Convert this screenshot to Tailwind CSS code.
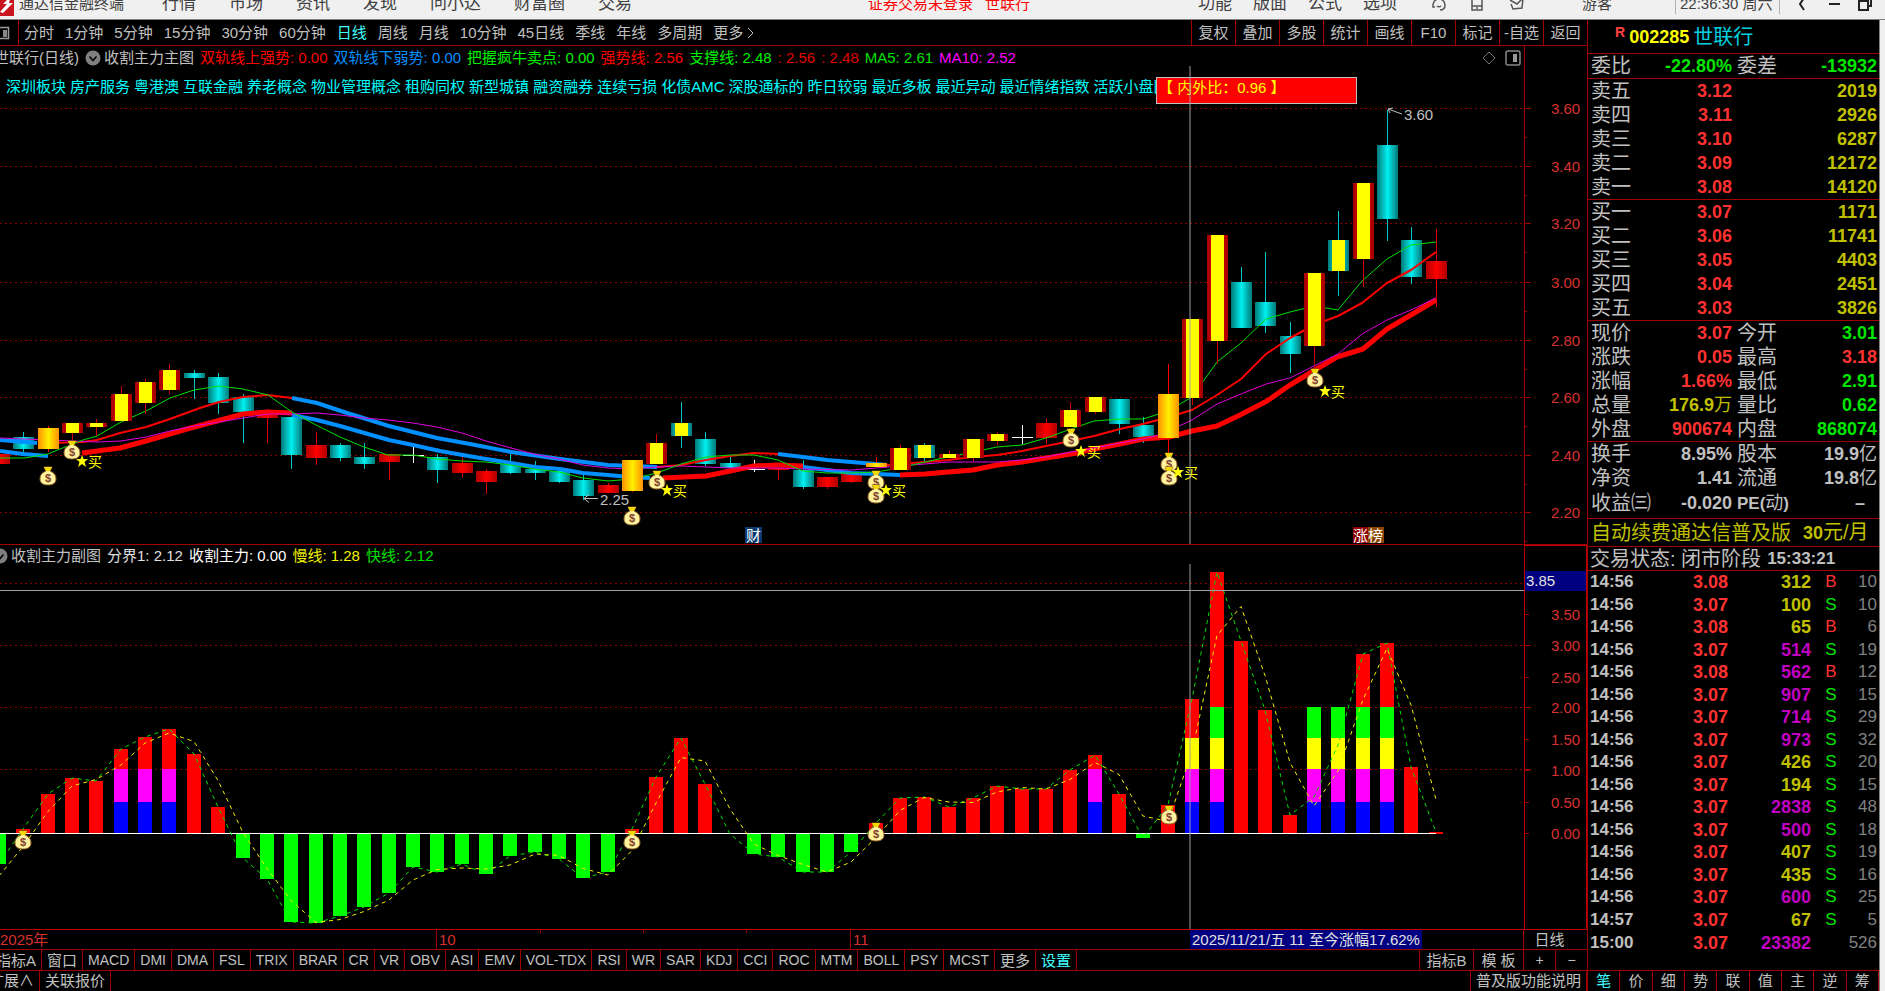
<!DOCTYPE html>
<html lang="zh-CN">
  <head>
    <meta charset="UTF-8" />
    <meta name="viewport" content="width=device-width, initial-scale=1.0" />
    <title>通达信金融终端</title>
    <script src="https://cdn.jsdelivr.net/npm/@tailwindcss/browser@4"></script>
  </head>
  <body class="flex h-screen flex-col overflow-hidden bg-black font-['Liberation_Sans','Noto_Sans_CJK_SC',sans-serif] text-[15px] leading-5 text-[#c0c0c0]">
    <!-- title bar -->
    <header class="h-5 shrink-0 overflow-hidden border-b border-[#808080] bg-[#f0f0f0] text-[#404040]">
      <div class="-mt-3 flex h-8 items-center whitespace-nowrap">
        <svg class="h-6 w-[14px] shrink-0" viewBox="0 0 14 24"><rect width="14" height="24" fill="#c8141e" /><path d="M0 20 7 12H3L11 4 9 11h4L3 21z" fill="#fff" /></svg>
        <span class="ml-[5px] w-[143px]">通达信金融终端</span>
        <nav class="flex gap-[33px] text-[17px]">
          <button>行情</button><button>市场</button><button>资讯</button><button>发现</button><button>问小达</button><button>财富圈</button><button>交易</button>
        </nav>
        <div class="flex flex-1 justify-center gap-3 pl-[68px] text-[#ff0000]"><span>证券交易未登录</span><span>世联行</span></div>
        <nav class="flex w-[233px] gap-[21px] text-[17px]">
          <button>功能</button><button>版面</button><button>公式</button><button>选项</button>
        </nav>
        <div class="flex w-[151px] gap-[22px]">
          <button aria-label="客服"><svg class="size-4" viewBox="0 0 16 16" fill="none" stroke="#555" stroke-width="1.5"><path d="M2 9a6 6 0 0 1 12 0c0 3-2 5-5 5M2 8v3h2M6 10c1 1 3 1 4 0" /></svg></button>
          <button aria-label="手机"><svg class="size-4" viewBox="0 0 16 16" fill="none" stroke="#555" stroke-width="1.5"><path d="M3 0v14h10V0M3 10h10M7 12h2" /></svg></button>
          <button aria-label="邮件"><svg class="size-5" viewBox="0 0 20 16" fill="none" stroke="#555" stroke-width="1.5"><path d="M2 3l14-1-1 10-9 1-2-5M3 4l7 4 6-6" /></svg></button>
        </div>
        <span class="w-[93px]">游客</span>
        <span class="w-[105px] border-x border-[#b0b0b0] px-1">22:36:30 周六</span>
        <div class="flex w-[105px] justify-between pr-3 pl-[14px]">
          <button aria-label="返回"><svg class="size-4" viewBox="0 0 16 16" fill="none" stroke="#222" stroke-width="2"><path d="M10 2 6 8l4 6" /></svg></button>
          <button aria-label="最小化"><svg class="size-4" viewBox="0 0 16 16" fill="none" stroke="#222" stroke-width="2"><path d="M3 8h11" /></svg></button>
          <button aria-label="还原"><svg class="size-4" viewBox="0 0 16 16" fill="none" stroke="#222" stroke-width="2"><path d="M2 5h9v9H2zM5 4V1h9v9h-3" /></svg></button>
        </div>
      </div>
    </header>

    <div class="flex min-h-0 flex-1">
      <main class="flex min-w-0 flex-1 flex-col">
        <!-- period bar -->
        <nav class="flex h-[26px] shrink-0 items-stretch border-b border-[#a00000] whitespace-nowrap">
          <button class="w-[19px] border-r border-[#a00000]" aria-label="侧栏"><svg class="h-3.5 w-[11px]" viewBox="0 0 11 14"><path d="M0 1.5h8.500v11H0" fill="none" stroke="#999" stroke-width="1.500" /><path d="M3 4h4v7H3z" fill="#888" /></svg></button>
          <div class="flex flex-1 items-center gap-[11px] pl-[5px]">
            <button>分时</button><button>1分钟</button><button>5分钟</button><button>15分钟</button><button>30分钟</button><button>60分钟</button><button class="text-[#40ffff]">日线</button><button>周线</button><button>月线</button><button>10分钟</button><button>45日线</button><button>季线</button><button>年线</button><button>多周期</button>
            <button class="flex items-center gap-1">更多<svg class="h-3 w-2" viewBox="0 0 8 12" fill="none" stroke="#c0c0c0"><path d="m1 1 5 5-5 5" /></svg></button>
          </div>
          <div class="flex *:w-11 *:border-l *:border-[#a00000]">
            <button>复权</button><button>叠加</button><button>多股</button><button>统计</button><button>画线</button><button>F10</button><button>标记</button><button>-自选</button><button>返回</button>
          </div>
        </nav>

        <!-- main chart -->
        <section class="relative min-h-0 flex-[499]">
          <svg id="mainChart" class="h-full w-full" viewBox="0 46 1587 499"></svg>
          <div class="absolute inset-x-0 top-0.5 flex h-5 items-center gap-1.5 overflow-hidden whitespace-nowrap">
            <span class="-ml-[6px]">世联行(日线)</span>
            <span class="flex items-center gap-[3px]"><svg class="size-4" viewBox="0 0 16 16"><circle cx="8" cy="8" r="7.500" fill="#808080" /><path d="m4.500 6.500 3.500 4 3.500-4" fill="none" stroke="#000" stroke-width="1.500" /></svg>收割主力主图</span>
            <span class="text-[#ff0000]">双轨线上强势: 0.00</span>
            <span class="text-[#0090ff]">双轨线下弱势: 0.00</span>
            <span class="text-[#00f000]">把握疯牛卖点: 0.00</span>
            <span class="text-[#ff0000]">强势线: 2.56</span>
            <span class="text-[#00f000]">支撑线: 2.48</span>
            <span class="text-[#e00000]">: 2.56</span>
            <span class="text-[#e00000]">: 2.48</span>
            <span class="text-[#00e000]">MA5: 2.61</span>
            <span class="text-[#ff00ff]">MA10: 2.52</span>
          </div>
          <div class="absolute top-[31px] left-0 flex w-[1156px] gap-1 overflow-hidden pl-[6px] whitespace-nowrap text-[#00ffff]">
            <span>深圳板块</span><span>房产服务</span><span>粤港澳</span><span>互联金融</span><span>养老概念</span><span>物业管理概念</span><span>租购同权</span><span>新型城镇</span><span>融资融券</span><span>连续亏损</span><span>化债AMC</span><span>深股通标的</span><span>昨日较弱</span><span>最近多板</span><span>最近异动</span><span>最近情绪指数</span><span>活跃小盘国</span>
          </div>
          <div class="absolute top-1 right-[66px] flex items-center gap-2">
            <svg class="size-4" viewBox="0 0 16 16" fill="none" stroke="#777"><path d="m8 2 6 6-6 6-6-6z" /></svg>
            <svg class="size-4" viewBox="0 0 16 16" fill="none" stroke="#888" stroke-width="1.500"><rect x="1" y="1" width="14" height="14" rx="2" /><path d="M8 4h4v8H8z" fill="#999" stroke="none" /></svg>
          </div>
        </section>

        <!-- indicator chart -->
        <section class="relative min-h-0 flex-[385]">
          <svg id="subChart" class="h-full w-full" viewBox="0 545 1587 385"></svg>
          <div class="absolute top-px left-0 flex h-5 items-center gap-1.5 whitespace-nowrap">
            <span class="flex items-center gap-[3px]"><svg class="-ml-2 size-4" viewBox="0 0 16 16"><circle cx="8" cy="8" r="7.500" fill="#808080" /><path d="m4.500 6.500 3.500 4 3.500-4" fill="none" stroke="#000" stroke-width="1.500" /></svg>收割主力副图</span>
            <span class="text-[#e0e0e0]">分界1: 2.12</span>
            <span class="text-[#ffffff]">收割主力: 0.00</span>
            <span class="text-[#f0f000]">慢线: 1.28</span>
            <span class="text-[#00e000]">快线: 2.12</span>
          </div>
        </section>

        <!-- date axis -->
        <div class="relative flex h-5 shrink-0 border-b border-[#a00000] text-[#d83030]">
          <span class="w-[436px]">2025年</span>
          <span class="flex w-[414px] items-start border-l border-[#a00000] pl-0.5">
            <span class="w-[101px]">10</span>
            <i class="h-[3px] w-[103px] border-l border-[#a00000]"></i><i class="h-[3px] w-[103px] border-l border-[#a00000]"></i><i class="h-[3px] border-l border-[#a00000]"></i>
          </span>
          <span class="flex-1 border-l border-[#a00000] pl-0.5">11</span>
          <span class="w-16 border-l border-[#a00000] pr-3 text-center text-[#c0c0c0]">日线</span>
          <span class="absolute top-0 left-[1190px] h-[19px] bg-[#000080] px-0.5 whitespace-nowrap text-[#e0e0e0]">2025/11/21/五 11 至今涨幅17.62%</span>
        </div>

        <!-- indicator tabs -->
        <nav class="flex h-[21px] shrink-0 border-b border-[#a00000] text-sm whitespace-nowrap">
          <div class="flex overflow-hidden *:border-r *:border-[#a00000] *:px-[5px]">
            <button class="-ml-[9px] text-[15px]">指标A</button><button class="text-[15px]">窗口</button><button>MACD</button><button>DMI</button><button>DMA</button><button>FSL</button><button>TRIX</button><button>BRAR</button><button>CR</button><button>VR</button><button>OBV</button><button>ASI</button><button>EMV</button><button>VOL-TDX</button><button>RSI</button><button>WR</button><button>SAR</button><button>KDJ</button><button>CCI</button><button>ROC</button><button>MTM</button><button>BOLL</button><button>PSY</button><button>MCST</button><button class="text-[15px]">更多</button><button class="text-[15px] text-[#40ffff]">设置</button>
          </div>
          <div class="ml-auto flex *:border-l *:border-[#a00000]">
            <button class="w-[54px] text-[15px]">指标B</button><button class="w-[50px] text-[15px]">模 板</button><button class="w-8">+</button><button class="w-8">−</button>
          </div>
        </nav>
        <nav class="flex h-5 shrink-0 whitespace-nowrap *:border-r *:border-[#a00000] *:px-[5px]">
          <button class="-ml-4">扩展∧</button><button>关联报价</button>
          <button class="ml-auto border-x pr-0.5 pl-1">普及版功能说明</button>
        </nav>
      </main>

      <!-- quote panel -->
      <aside class="flex w-[298px] shrink-0 border-l border-[#a00000]">
        <div class="flex flex-1 flex-col text-xl/6 whitespace-nowrap">
          <h1 class="flex h-[34px] items-center gap-1 border-b border-[#a00000] pl-[27px]"><span class="self-start text-sm/6 font-bold text-[#ff4040]">R</span><span class="text-lg/6 font-bold text-[#ffff00]">002285</span><span class="text-[#00d0e0]">世联行</span></h1>
          <table class="w-full table-fixed border-b border-[#a00000]"><tbody id="ratio"></tbody></table>
          <table class="w-full table-fixed border-b border-[#a00000]"><tbody id="asks"></tbody></table>
          <table class="w-full table-fixed border-b border-[#a00000]"><tbody id="bids"></tbody></table>
          <table class="w-full table-fixed border-b border-[#a00000]"><tbody id="stats"></tbody></table>
          <div class="border-b border-[#a00000] pb-0.5"><table class="w-full table-fixed"><tbody id="basics"></tbody></table></div>
          <a href="#" class="flex h-7 items-center gap-3 border-b border-[#a00000] pl-[3px] text-[#c0c000]"><span>自动续费通达信普及版</span><span><b class="text-lg/6">30</b>元/月</span></a>
          <p class="flex h-6 items-center gap-1.5 border-b border-[#a00000] pl-0.5">交易状态: 闭市阶段 <b class="text-[17px]">15:33:21</b></p>
          <table class="h-[383px] w-full table-fixed text-lg/5">
            <colgroup><col class="w-[56px]" /><col class="w-[84px]" /><col class="w-[83px]" /><col class="w-[40px]" /><col /></colgroup>
            <tbody id="ticks"></tbody>
          </table>
          <nav class="mt-auto flex h-[21px] border-t border-[#a00000] text-[15px]/5 *:flex-1 *:border-r *:border-[#a00000]">
            <button class="text-[#40ffff]">笔</button><button>价</button><button>细</button><button>势</button><button>联</button><button>值</button><button>主</button><button>逆</button><button>筹</button>
          </nav>
        </div>
        <div class="w-[6px] border-l border-[#808080] bg-[#f0f0f0]"></div>
      </aside>
    </div>

    <script>
      // quote tables
      const R = "text-[#ff3232]", G = "text-[#00e600]", Y = "text-[#c0c000]", W = "text-[#c0c0c0]", M = "text-[#c000c0]";

      const row4 = (r) => `<tr class="h-6">
        <th class="w-[64px] p-0 pl-[3px] text-left font-normal">${r[0]}</th>
        <td class="w-[80px] p-0 text-right text-lg/6 font-bold ${r[2]}">${r[1]}</td>
        <th class="w-[64px] p-0 pl-[5px] text-left font-normal">${r[3] || ""}</th>
        <td class="p-0 pr-0.5 text-right text-lg/6 font-bold ${r[5]}">${r[4]}</td></tr>`;
      const fill = (id, rows) => (document.getElementById(id).innerHTML = rows.map(row4).join(""));

      fill("ratio", [["委比", "-22.80%", G, "委差", "-13932", G]]);
      fill("asks", [["卖五", "3.12", 2019], ["卖四", "3.11", 2926], ["卖三", "3.10", 6287], ["卖二", "3.09", 12172], ["卖一", "3.08", 14120]].map((a) => [a[0], a[1], R, "", a[2], Y]));
      fill("bids", [["买一", "3.07", 1171], ["买二", "3.06", 11741], ["买三", "3.05", 4403], ["买四", "3.04", 2451], ["买五", "3.03", 3826]].map((a) => [a[0], a[1], R, "", a[2], Y]));
      fill("stats", [
        ["现价", "3.07", R, "今开", "3.01", G],
        ["涨跌", "0.05", R, "最高", "3.18", R],
        ["涨幅", "1.66%", R, "最低", "2.91", G],
        ["总量", '176.9<span class="font-normal">万</span>', Y, "量比", "0.62", G],
        ["外盘", "900674", R, "内盘", "868074", G],
      ]);
      fill("basics", [
        ["换手", "8.95%", W, "股本", '19.9<span class="font-normal">亿</span>', W],
        ["净资", "1.41", W, "流通", '19.8<span class="font-normal">亿</span>', W],
        ["收益㈢", "-0.020", W, '<b class="text-[17px]">PE(</b><span class="text-lg/6">动</span><b class="text-[17px]">)</b>', '<span class="pr-3">–</span>', W],
      ]);

      const ticks = [
        ["14:56", "3.08", 312, "B", 10], ["14:56", "3.07", 100, "S", 10], ["14:56", "3.08", 65, "B", 6], ["14:56", "3.07", 514, "S", 19],
        ["14:56", "3.08", 562, "B", 12], ["14:56", "3.07", 907, "S", 15], ["14:56", "3.07", 714, "S", 29], ["14:56", "3.07", 973, "S", 32],
        ["14:56", "3.07", 426, "S", 20], ["14:56", "3.07", 194, "S", 15], ["14:56", "3.07", 2838, "S", 48], ["14:56", "3.07", 500, "S", 18],
        ["14:56", "3.07", 407, "S", 19], ["14:56", "3.07", 435, "S", 16], ["14:56", "3.07", 600, "S", 25], ["14:57", "3.07", 67, "S", 5],
        ["15:00", "3.07", 23382, "", 526],
      ];
      document.getElementById("ticks").innerHTML = ticks.map((t) => `<tr>
        <td class="p-0 pl-0.5 text-[17px] font-bold">${t[0]}</td>
        <td class="p-0 text-right font-bold ${R}">${t[1]}</td>
        <td class="p-0 text-right font-bold ${t[2] >= 500 ? M : Y}">${t[2]}</td>
        <td class="p-0 text-center text-[17px] ${t[3] === "B" ? R : G}">${t[3]}</td>
        <td class="p-0 pr-0.5 text-right text-[17px] text-[#808080]"><span class="-ml-2">${t[4]}</span></td></tr>`).join("");

      // charts
      const X = (i) => Math.round(-1 + 24.35 * i);
      const rect = (x, y, w, h, f, extra = "") => `<rect x="${x}" y="${y}" width="${w}" height="${h}" fill="${f}" ${extra}/>`;
      const seg = (x1, y1, x2, y2, c, extra = "") => `<path d="M${x1} ${y1}L${x2} ${y2}" stroke="${c}" ${extra}/>`;
      const text = (x, y, s, c, size = 15) => `<text x="${x}" y="${y}" fill="${c}" font-size="${size}">${s}</text>`;
      const poly = (pts, c, w, extra = "") => `<polyline points="${pts}" fill="none" stroke="${c}" stroke-width="${w}" stroke-linejoin="round" ${extra}/>`;
      const bag = (x, y) => `<g transform="translate(${x} ${y})">
        <path d="M-4-9h8l-2 4c5 2 6 5 6 8 0 4-3 6-8 6s-8-2-8-6c0-3 1-6 6-8z" fill="#fff3a0" stroke="#8a5a20"/>
        <path d="M-4-9h8l-2 4h-4z" fill="#f0d800"/>
        <text y="6" text-anchor="middle" font-size="11" font-weight="bold" fill="#80402a">$</text></g>`;
      const star = (x, y) => `<path transform="translate(${x} ${y})" d="M0-6 1.500-2H6L2.500 1 4 6 0 3-4 6-2.500 1-6-2h4.500z" fill="#ffff00"/>`;

      // kind, body top, body bottom, high, low
      const candles = [
        ["r", 454, 464, 454, 480], ["c", 437, 449, 432, 456], ["o", 428, 449, 426, 452], ["y", 423, 433, 423, 440], ["y", 423, 427, 419, 436],
        ["y", 394, 421, 386, 421], ["y", 382, 403, 379, 414], ["y", 370, 390, 364, 394], ["c", 373, 378, 370, 399], ["c", 377, 403, 373, 414],
        ["c", 397, 412, 394, 443], ["r", 414, 418, 409, 443], ["c", 417, 455, 417, 469], ["r", 445, 458, 432, 465], ["c", 445, 458, 443, 461],
        ["c", 457, 464, 443, 469], ["r", 454, 462, 454, 480], ["d", 455, 456, 446, 463], ["c", 457, 470, 454, 483], ["r", 463, 473, 457, 477],
        ["r", 471, 482, 469, 494], ["c", 464, 473, 451, 474], ["c", 469, 473, 461, 480], ["c", 471, 482, 471, 483], ["c", 480, 496, 474, 500],
        ["r", 485, 493, 483, 493], ["o", 460, 491, 460, 492], ["y", 443, 464, 434, 464], ["k", 423, 436, 402, 448], ["c", 439, 464, 432, 466],
        ["c", 463, 468, 457, 468], ["d", 469, 470, 460, 472], ["r", 468, 470, 468, 480], ["c", 470, 487, 460, 489], ["r", 477, 487, 477, 489],
        ["r", 474, 482, 474, 483], ["o", 463, 467, 457, 467], ["y", 448, 470, 445, 470], ["k", 445, 458, 443, 461], ["y", 454, 458, 451, 458],
        ["y", 439, 458, 439, 461], ["y", 434, 441, 432, 445], ["d", 437, 438, 425, 444], ["r", 423, 438, 419, 444], ["y", 410, 427, 402, 427],
        ["y", 397, 412, 397, 414], ["c", 399, 424, 399, 434], ["c", 425, 437, 417, 443], ["o", 394, 438, 364, 453], ["y", 319, 398, 319, 405],
        ["y", 235, 341, 235, 364], ["c", 282, 328, 267, 328], ["c", 302, 326, 252, 333], ["c", 336, 354, 322, 373], ["y", 273, 346, 273, 368],
        ["k", 240, 271, 211, 296], ["y", 183, 259, 183, 287], ["c", 145, 219, 110, 241], ["c", 240, 277, 227, 284], ["r", 261, 279, 229, 307],
      ];
      const wick = { r: "#e00000", y: "#d00000", o: "#ff0000", c: "#00c8c8", k: "#00c8c8", d: "#ffffff" };
      const body = { r: "url(#red)", y: "url(#edge)", o: "url(#gold)", c: "url(#cyan)", k: "url(#teal)", d: "#ffffff" };
      const candle = (c, i) => rect(X(i), c[3], 1, c[4] - c[3], wick[c[0]]) + rect(X(i) - 10, c[1], 21, c[2] - c[1], body[c[0]]);
      const draw = (kinds) => `<g shape-rendering="crispEdges">${candles.map((c, i) => (kinds.includes(c[0]) ? candle(c, i) : "")).join("")}</g>`;

      const upper = [
        ["b", "0,440 37,443"],
        ["r", "50,443 83,442 97,440 120,433 146,427 167,420 200,408 219,402 243,397 267,395 292,398"],
        ["b", "292,398 317,403 347,413 389,426 437,438 470,444 511,452 560,459 608,465 657,467"],
        ["r", "657,467 681,465 706,460 730,456 754,453 778,454"],
        ["b", "778,454 803,457 827,460 851,462 876,464 887,465"],
        ["r", "887,465 900,464 925,462 948,460 973,457 997,455 1022,451 1046,446 1071,441 1094,436 1120,429 1143,424 1169,417 1192,410 1217,395 1241,379 1266,354 1290,338 1314,325 1338,316 1362,303 1387,283 1411,270 1436,252"],
      ];
      const lower = [
        ["b", "0,451 23,454 48,456"],
        ["r", "82,453 120,448 146,441 187,429 217,421 243,414 267,412 292,413"],
        ["b", "292,415 317,420 340,426 389,440 413,445 440,451 480,458 511,463 535,467 560,469 583,473 608,475 630,477 650,478"],
        ["r", "663,478 706,476 730,471 754,466 778,465 803,466"],
        ["b", "803,467 827,470 851,473 876,474 900,475"],
        ["r", "900,475 925,474 948,472 973,470 997,465 1022,462 1046,458 1071,454 1094,449 1120,444 1143,439 1169,437 1192,431 1217,426 1240,415 1267,401 1290,385 1315,370 1337,357 1363,349 1387,329 1411,315 1436,300"],
      ];
      const ma5 = "0,458 25,458 48,454 60,449 83,440 97,436 121,422 146,411 170,398 194,390 219,386 243,389 268,395 292,412 316,425 340,437 364,447 388,455 413,455 437,459 462,461 486,462 511,465 534,469 559,472 583,478 608,481 632,479 657,473 681,464 706,457 730,455 754,455 778,460 803,471 827,473 852,473 876,472 900,468 925,462 948,457 973,452 997,447 1022,445 1046,438 1071,429 1094,421 1120,419 1143,419 1168,411 1192,397 1217,362 1241,343 1266,319 1290,312 1314,306 1338,310 1362,281 1387,259 1411,245 1436,242";
      const ma10 = "0,438 48,440 73,441 97,442 121,441 146,437 170,431 194,426 219,422 243,418 268,414 292,414 316,413 340,415 364,418 388,420 413,423 437,427 462,433 486,441 511,448 534,454 559,459 583,465 608,468 632,469 657,467 681,466 706,467 730,468 778,468 803,469 852,470 876,468 900,466 925,464 948,462 997,462 1022,460 1046,457 1071,452 1094,448 1120,443 1143,439 1162,434 1192,420 1217,404 1241,394 1266,384 1290,378 1314,366 1338,354 1362,334 1387,320 1411,310 1436,298";

      const grad = (id, stops) => `<linearGradient id="${id}">${stops.map((s) => `<stop offset="${s[0]}" stop-color="${s[1]}"/>`).join("")}</linearGradient>`;
      const defs = `<defs>
        ${grad("red", [[0, "#b00000"], [0.5, "#ff0000"], [1, "#b00000"]])}
        ${grad("cyan", [[0, "#007878"], [0.5, "#00f0f0"], [1, "#007878"]])}
        ${grad("gold", [[0, "#ff9000"], [0.25, "#ffc000"], [0.5, "#fff000"], [0.75, "#ffc000"], [1, "#ff9000"]])}
        ${grad("edge", [[0, "#a00000"], [0.17, "#c00000"], [0.17, "#ffff00"], [0.83, "#ffff00"], [0.83, "#c00000"], [1, "#a00000"]])}
        ${grad("teal", [[0, "#007878"], [0.17, "#00a0a0"], [0.17, "#ffff00"], [0.83, "#ffff00"], [0.83, "#00a0a0"], [1, "#007878"]])}
      </defs>`;

      const grid = (y) => seg(0, y + 0.5, 1524, y + 0.5, "#8c0000", 'stroke-dasharray="2 3" shape-rendering="crispEdges"') + seg(1524, y + 0.5, 1531, y + 0.5, "#a00000");
      const prices = [[108, "3.60"], [166, "3.40"], [223, "3.20"], [282, "3.00"], [340, "2.80"], [397, "2.60"], [455, "2.40"], [512, "2.20"]];

      document.getElementById("mainChart").innerHTML = defs
        + prices.map((p) => grid(p[0]) + seg(1524, p[0] + 29.5, 1527, p[0] + 29.5, "#a00000") + text(1551, p[0] + 6, p[1], "#d83030")).join("")
        + seg(1524.5, 46, 1524.5, 545, "#a00000")
        + draw("rcd")
        + upper.map((l) => poly(l[1], l[0] === "b" ? "#0090ff" : "#ff0000", l[0] === "b" ? 4 : 2)).join("")
        + lower.map((l) => poly(l[1], l[0] === "b" ? "#0090ff" : "#ff0000", l[0] === "b" ? 4 : 5)).join("")
        + poly(ma10, "#e000e0", 1) + poly(ma5, "#00e000", 1)
        + draw("yko")
        + [[48, 476], [72, 450], [632, 516], [657, 480], [876, 480], [876, 494], [1071, 438], [1169, 462], [1169, 476], [1315, 378]].map((b) => bag(b[0], b[1])).join("")
        + [[82, 461], [667, 490], [886, 490], [1081, 451], [1178, 472], [1325, 391]].map((s) => star(s[0], s[1]) + text(s[0] + 6, s[1] + 6, "买", "#ffff00", 14)).join("")
        + `<path d="M598 498.500H584m5-4-5 4 5 4" fill="none" stroke="#c0c0c0"/>` + text(600, 505, "2.25", "#c0c0c0")
        + `<path d="m1402 114-14-5m5-1-5 1 2 4" fill="none" stroke="#c0c0c0"/>` + text(1404, 120, "3.60", "#c0c0c0")
        + rect(745, 527, 17, 16, "#0a3a70") + text(746, 541, "财", "#ffffff")
        + rect(1353, 527, 15, 16, "#8c0000") + rect(1368, 527, 16, 16, "#8c4600") + text(1353, 541, "涨榜", "#ffffff")
        + rect(1156.5, 77.5, 200, 26, "#ff0000", 'stroke="#c0c0c0"') + text(1158, 93, "【 内外比：0.96 】", "#ffff00")
        + seg(1190, 66, 1190, 544, "#a0a0a0")
        + seg(0, 544.5, 1587, 544.5, "#a00000");

      // bar end for each day; 834 is the zero line
      const bars = [864, 829, 794, 778, 781, 749, 737, 729, 754, 807, 858, 879, 922, 923, 916, 907, 893, 867, 872, 864, 874, 856, 852, 859, 878, 872, 829, 777, 738, 784, 834, 854, 857, 872, 872, 852, 823, 798, 797, 807, 798, 786, 789, 789, 770, 755, 794, 838, 805, 699, 572, 641, 710, 815, 797, 745, 654, 643, 767, 832];
      const levels = { 5: 2, 6: 2, 7: 2, 45: 2, 49: 3, 50: 4, 54: 4, 55: 4, 56: 4, 57: 4 };
      const stack = [[802, 32, "#0000ff"], [769, 33, "#ff00ff"], [738, 31, "#ffff00"], [707, 31, "#00ff00"]];
      const fast = bars.map((y, i) => `${X(i)},${y}`).join(" ");
      const slow = bars.map((y, i) => `${X(i)},${i ? (y + bars[i - 1]) / 2 : 876}`).join(" ");
      const scale = [[614, "3.50"], [645, "3.00"], [677, "2.50"], [707, "2.00"], [739, "1.50"], [770, "1.00"], [802, "0.50"], [833, "0.00"]];

      document.getElementById("subChart").innerHTML = [583, 645, 707, 769].map(grid).join("")
        + scale.map((s) => seg(1524, s[0] + 0.5, 1529, s[0] + 0.5, "#a00000") + text(1551, s[0] + 6, s[1], "#d83030")).join("")
        + `<g shape-rendering="crispEdges">`
        + bars.map((y, i) => rect(X(i) - 7, Math.min(y, 834), 14, Math.abs(834 - y), y < 834 ? "#ff0000" : "#00ff00") + stack.slice(0, levels[i] || 0).map((s) => rect(X(i) - 7, s[0], 14, s[1], s[2])).join("")).join("")
        + `</g>`
        + seg(0, 833.5, 1436, 833.5, "#ffffff")
        + poly(fast, "#00e000", 1, 'stroke-dasharray="4 4"') + poly(slow, "#f0f000", 1, 'stroke-dasharray="4 4"')
        + [[23, 840], [632, 840], [876, 832], [1169, 815]].map((b) => bag(b[0], b[1])).join("")
        + seg(1190, 564, 1190, 930, "#a0a0a0") + seg(0, 590.5, 1524, 590.5, "#a0a0a0")
        + rect(1525, 571, 62, 20, "#000080") + text(1526, 586, "3.85", "#e0e0e0")
        + `<path d="M1524.500 545.500H1586.500V929.500H0M1524.500 545V930" fill="none" stroke="#c00000"/>`;
    </script>
  </body>
</html>
